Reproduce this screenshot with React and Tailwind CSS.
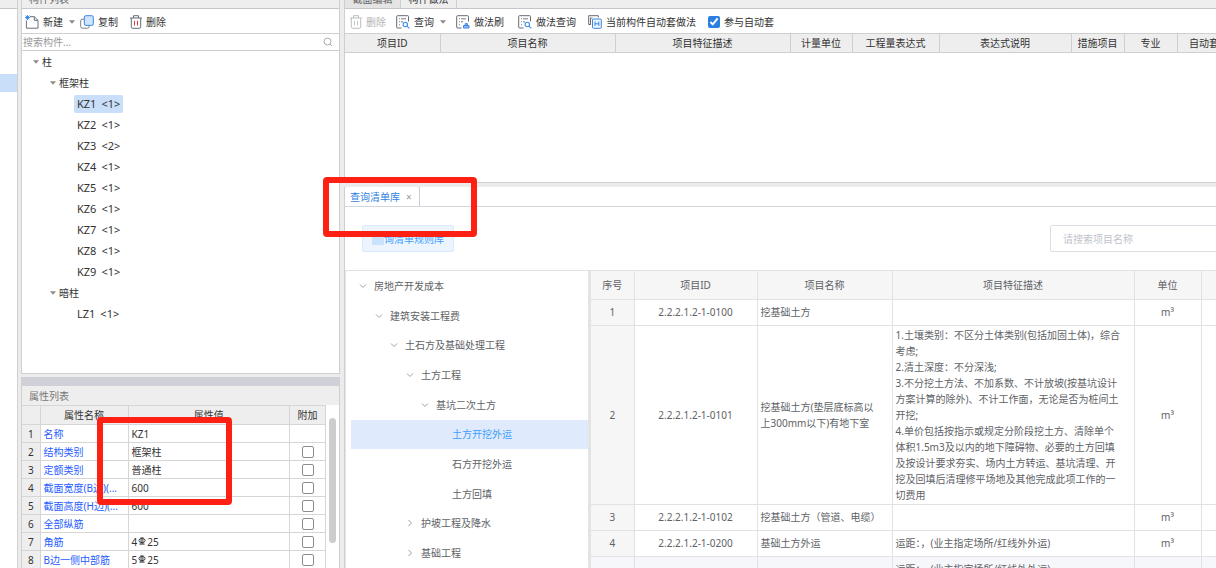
import React, { useState } from "react";

const components = [
  { label: "柱", level: 0 },
  { label: "框架柱", level: 1 },
  { label: "KZ1 <1>", level: 2 },
  { label: "KZ2 <1>", level: 2 },
  { label: "KZ3 <2>", level: 2 },
  { label: "KZ4 <1>", level: 2 },
  { label: "KZ5 <1>", level: 2 },
  { label: "KZ6 <1>", level: 2 },
  { label: "KZ7 <1>", level: 2 },
  { label: "KZ8 <1>", level: 2 },
  { label: "KZ9 <1>", level: 2 },
  { label: "暗柱", level: 1 },
  { label: "LZ1 <1>", level: 2 },
];

const componentIndent = ["pl-[11px]", "pl-[28px]", "pl-[52px]"];

const properties = [
  { name: "名称", value: "KZ1", noCheck: true },
  { name: "结构类别", value: "框架柱" },
  { name: "定额类别", value: "普通柱" },
  { name: "截面宽度(B边)(...", value: "600" },
  { name: "截面高度(H边)(...", value: "600" },
  { name: "全部纵筋", value: "" },
  { name: "角筋", count: "4", value: "25" },
  { name: "B边一侧中部筋", count: "5", value: "25" },
];

const methodColumns = [
  { label: "项目ID", width: "w-[95px]" },
  { label: "项目名称", width: "w-[175px]" },
  { label: "项目特征描述", width: "w-[175px]" },
  { label: "计量单位", width: "w-[62px]" },
  { label: "工程量表达式", width: "w-[87px]" },
  { label: "表达式说明", width: "w-[132px]" },
  { label: "措施项目", width: "w-[53px]" },
  { label: "专业", width: "w-[53px]" },
  { label: "自动套", width: "w-[54px]" },
];

const library = [
  { label: "房地产开发成本", level: 0, open: true },
  { label: "建筑安装工程费", level: 1, open: true },
  { label: "土石方及基础处理工程", level: 2, open: true },
  { label: "土方工程", level: 3, open: true },
  { label: "基坑二次土方", level: 4, open: true },
  { label: "土方开挖外运", level: 5, leaf: true },
  { label: "石方开挖外运", level: 5, leaf: true },
  { label: "土方回填", level: 5, leaf: true },
  { label: "护坡工程及降水", level: 3 },
  { label: "基础工程", level: 3 },
];

const libraryIndent = [
  "pl-[8px]",
  "pl-[24px]",
  "pl-[39px]",
  "pl-[55px]",
  "pl-[70px]",
  "pl-[86px]",
];

const items = [
  { id: "2.2.2.1.2-1-0100", name: "挖基础土方", desc: [], unit: "m³" },
  {
    id: "2.2.2.1.2-1-0101",
    name: "挖基础土方(垫层底标高以上300mm以下)有地下室",
    desc: [
      "1.土壤类别：不区分土体类别(包括加固土体)，综合考虑;",
      "2.清土深度：不分深浅;",
      "3.不分挖土方法、不加系数、不计放坡(按基坑设计方案计算的除外)、不计工作面，无论是否为桩间土开挖;",
      "4.单价包括按指示或规定分阶段挖土方、清除单个体积1.5m3及以内的地下障碍物、必要的土方回填及按设计要求夯实、场内土方转运、基坑清理、开挖及回填后清理修平场地及其他完成此项工作的一切费用",
    ],
    unit: "m³",
  },
  { id: "2.2.2.1.2-1-0102", name: "挖基础土方（管道、电缆）", desc: [], unit: "m³" },
  { id: "2.2.2.1.2-1-0200", name: "基础土方外运", desc: ["运距：，(业主指定场所/红线外外运)"], unit: "m³" },
];

function NewIcon() {
  return (
    <svg width="14" height="14" viewBox="0 0 14 14" fill="none">
      <path d="M5 1.7h4.3l3.7 3.6v7.9H1.4V5.5M9.3 1.7v3.6H13" stroke="#6b7078" />
      <path d="M2.5 0v5M0 2.5h5M.7.7l3.6 3.6M4.3.7.7 4.3" stroke="#2f83ee" strokeWidth=".9" />
    </svg>
  );
}

function CopyIcon() {
  return (
    <svg width="14" height="14" viewBox="0 0 14 14" fill="none">
      <path d="M4 4.2H2.3Q.7 4.2.7 5.8v5.8q0 1.6 1.6 1.6h5.2q1.6 0 1.6-1.6v-1" stroke="#7a7e86" />
      <rect x="4.3" y=".7" width="9" height="9.7" rx="1.5" fill="#cfe3fc" stroke="#3c86e4" />
    </svg>
  );
}

function TrashIcon({ muted }) {
  return (
    <svg width="12" height="14" viewBox="0 0 12 14" fill="none" stroke={muted ? "#bdbdbd" : "#666b72"}>
      <path d="M0 3h12M3.5 3V.7h5V3M1.3 3v8.8q0 1.5 1.5 1.5h6.4q1.5 0 1.5-1.5V3" />
      <path d="M4.5 5.8v4.7M7.5 5.8v4.7" stroke={muted ? "#c4c4c4" : "#e0393e"} />
    </svg>
  );
}

function SheetIcon({ brush }) {
  return (
    <svg width="14" height="14" viewBox="0 0 14 14" fill="none">
      <path d="M5.5 13h-4Q.7 13 .7 12.200V1.500Q.7.7 1.500.7h10.200q.8 0 .8.8v5" stroke="#666b72" />
      <path d="M3 3.800h1M5 3.800h5M3 6.800h1M5 6.800h2M3 9.800h1" stroke="#777c83" />
      {brush ? (
        <path d="M7.500 13v-2.500H13V13zM9.200 10.500V8.600h2.100v1.900" fill="#8bbcf8" stroke="#3c86e4" />
      ) : (
        <g stroke="#3c8cf0" strokeWidth="1.1">
          <circle cx="9.3" cy="9.5" r="2.2" />
          <path d="m11 11.200 2.300 2.200" />
        </g>
      )}
    </svg>
  );
}

function AutoIcon() {
  return (
    <svg width="14" height="14" viewBox="0 0 14 14" fill="none">
      <path d="M2.500 9.500H.7V.7h9.600v1.800M4.500 3h-2v7" stroke="#666b72" />
      <rect x="4.5" y="4" width="8.8" height="9.3" rx="1" fill="#eef5ff" stroke="#3c86e4" />
      <path d="M7 6.500v4.500M10.800 6.500v4.500M7 8.800h3.800" stroke="#3c86e4" />
    </svg>
  );
}

function Caret() {
  return (
    <svg width="6" height="4" viewBox="0 0 6 4" className="shrink-0">
      <path d="M0 .3h6L3 3.700z" fill="#8a8a8a" />
    </svg>
  );
}

function Chevron({ open }) {
  return (
    <svg width="8" height="8" viewBox="0 0 8 8" fill="none" stroke="#a0a0a0" className="shrink-0">
      <path d={open ? "M1 2.5 4 5.5 7 2.5" : "M2.5 1 5.5 4 2.5 7"} />
    </svg>
  );
}

// HRB400 rebar mark drawn between the bar count and the diameter
function RebarMark() {
  return (
    <svg width="8" height="8" viewBox="0 0 9 9" fill="none" stroke="#333" className="mx-px inline-block align-[1px]">
      <ellipse cx="4.5" cy="4" rx="3.5" ry="2.3" />
      <path d="M3.500 0v8M5.500 0v8M1.500 8h6" />
    </svg>
  );
}

function ToolButton({ icon, label, disabled }) {
  return (
    <button disabled={disabled} className="flex shrink-0 items-center gap-1 text-[#333] disabled:text-[#b5b5b5]">
      {icon}
      {label}
    </button>
  );
}

function ComponentPanel() {
  const [selected, setSelected] = useState("KZ1 <1>");

  return (
    <section className="flex h-[374px] shrink-0 flex-col border border-t-0 border-[#cfcfcf] bg-white">
      <h2 className="-mt-[11px] flex h-5 shrink-0 items-center border-b border-[#c3c7cb] bg-[#eee] pl-[7px] text-[#666]">
        构件列表
      </h2>
      <div className="flex h-[25px] shrink-0 items-center border-b border-[#cfcfcf] pt-px pl-[3px]">
        <ToolButton icon={<NewIcon />} label="新建" />
        <span className="mr-[5px] ml-[6px]">
          <Caret />
        </span>
        <ToolButton icon={<CopyIcon />} label="复制" />
        <span className="w-3" />
        <ToolButton icon={<TrashIcon />} label="删除" />
      </div>
      <label className="flex h-[17px] shrink-0 items-center border-b border-[#cfcfcf] pr-[6px]">
        <input
          type="text"
          aria-label="搜索构件"
          placeholder="搜索构件..."
          className="min-w-0 flex-1 pl-px outline-none placeholder:text-[#999]"
        />
        <svg width="10" height="10" viewBox="0 0 10 10" fill="none" stroke="#aaa">
          <circle cx="4.5" cy="4.5" r="3.5" />
          <path d="m7 7 2 2" />
        </svg>
      </label>
      <ul>
        {components.map((c) => (
          <li key={c.label} className={`flex h-[21px] items-center ${componentIndent[c.level]}`}>
            {c.level < 2 ? (
              <button className="flex items-center gap-[3px]">
                <Caret />
                {c.label}
              </button>
            ) : (
              <button
                onClick={() => setSelected(c.label)}
                className={`h-[18px] rounded-[2px] px-[3px] text-[11px] ${
                  selected === c.label ? "bg-[#c9dff9]" : ""
                }`}
              >
                {c.label.split(" ")[0]}
                <span className="ml-[5px]">{c.label.split(" ")[1]}</span>
              </button>
            )}
          </li>
        ))}
      </ul>
    </section>
  );
}

function PropertyPanel() {
  return (
    <section className="mt-[3px] flex min-h-0 flex-1 flex-col overflow-hidden border-x border-[#cfcfcf] bg-white">
      <div className="h-[9px] shrink-0 bg-[#d0d1d8]" />
      <h2 className="flex h-[19px] shrink-0 items-center bg-[#eee] pl-[7px] text-[#777]">属性列表</h2>
      <div className="flex min-h-0 flex-1">
        <table className="w-full table-fixed border-collapse self-start">
          <thead>
            <tr className="h-[19px] bg-[#eee]">
              <th className="w-[18px] border border-l-0 border-[#d6d6d6]" />
              <th className="w-[88px] border border-[#d6d6d6] font-normal">属性名称</th>
              <th className="border border-[#d6d6d6] font-normal">属性值</th>
              <th className="w-[36px] border border-[#d6d6d6] font-normal">附加</th>
            </tr>
          </thead>
          <tbody>
            {properties.map((p, i) => (
              <tr key={p.name} className="h-[18px]">
                <td className="border border-l-0 border-[#d6d6d6] bg-[#eee] text-center">{i + 1}</td>
                <td className="overflow-hidden border border-[#d6d6d6] pl-[3px] whitespace-nowrap text-[#1f5cff]">
                  {p.name}
                </td>
                <td className="border border-[#d6d6d6] pl-[3px]">
                  {p.count}
                  {p.count && <RebarMark />}
                  {p.value}
                </td>
                <td className="border border-[#d6d6d6]">
                  {!p.noCheck && (
                    <input
                      type="checkbox"
                      aria-label={p.name + " 附加"}
                      className="mx-auto block h-3 w-3 appearance-none rounded-[2px] border border-[#8c8c8c] bg-white"
                    />
                  )}
                </td>
              </tr>
            ))}
          </tbody>
        </table>
        <div className="w-[13px] shrink-0 px-[3px] pt-[13px]">
          <div className="h-[125px] rounded-full bg-[#cdcdcd]" />
        </div>
      </div>
    </section>
  );
}

function MethodPanel() {
  return (
    <section className="flex h-[183px] shrink-0 flex-col overflow-hidden border-b border-l border-[#cfcfcf] bg-white">
      <div className="-mt-[11px] flex h-5 shrink-0 border-b border-[#c3c7cb] bg-[#eee]">
        <button className="w-[56px] border-r border-[#cfcfcf] bg-[#e4e4e4] text-[#666]">截面编辑</button>
        <button className="w-[56px] border-r border-[#cfcfcf]">构件做法</button>
      </div>
      <div className="flex h-6 shrink-0 items-center pt-px pl-[5px]">
        <ToolButton icon={<TrashIcon muted />} label="删除" disabled />
        <span className="w-[10px]" />
        <ToolButton icon={<SheetIcon />} label="查询" />
        <span className="mr-[10px] ml-[6px]">
          <Caret />
        </span>
        <ToolButton icon={<SheetIcon brush />} label="做法刷" />
        <span className="w-[14px]" />
        <ToolButton icon={<SheetIcon />} label="做法查询" />
        <span className="w-3" />
        <ToolButton icon={<AutoIcon />} label="当前构件自动套做法" />
        <label className="ml-3 flex shrink-0 items-center gap-1">
          <input type="checkbox" defaultChecked className="h-3 w-3 accent-[#2a7fe0]" />
          参与自动套
        </label>
      </div>
      <table className="w-[886px] table-fixed border-collapse">
        <thead>
          <tr className="h-[19px] bg-[#eee]">
            {methodColumns.map((c) => (
              <th key={c.label} className={`${c.width} border border-l-0 border-[#cfcfcf] font-normal`}>
                {c.label}
              </th>
            ))}
          </tr>
        </thead>
      </table>
    </section>
  );
}

function LibraryTree() {
  const [selected, setSelected] = useState("土方开挖外运");

  return (
    <ul className="flex w-[246px] shrink-0 flex-col border-r-[3px] border-l border-[#e4e4e4] pl-[5px] text-[#606266]">
      {library.map((n) => (
        <li key={n.label} className="flex flex-1">
          <button
            onClick={() => setSelected(n.label)}
            className={`flex flex-1 items-center gap-[7px] ${libraryIndent[n.level]} ${
              selected === n.label ? "bg-[#dfebfc] text-[#409eff]" : ""
            }`}
          >
            {n.leaf ? <span className="w-2" /> : <Chevron open={n.open} />}
            {n.label}
          </button>
        </li>
      ))}
    </ul>
  );
}

function ItemTable() {
  const th = "border border-t-0 border-l-0 border-[#e2e2e2] font-normal";
  const td = "border border-t-0 border-l-0 border-[#e2e2e2]";

  return (
    <table className="w-[648px] shrink-0 table-fixed border-collapse self-start leading-4 text-[#606266]">
      <thead>
        <tr className="h-[28px] bg-[#f6f6f6]">
          <th className={`w-[43px] ${th}`}>序号</th>
          <th className={`w-[123px] ${th}`}>项目ID</th>
          <th className={`w-[135px] ${th}`}>项目名称</th>
          <th className={`w-[242px] ${th}`}>项目特征描述</th>
          <th className={`w-[67px] ${th}`}>单位</th>
          <th className={th} />
        </tr>
      </thead>
      <tbody>
        {items.map((item, i) => (
          <tr key={item.id} className="h-[26px]">
            <td className={`bg-[#f6f6f6] text-center ${td}`}>{i + 1}</td>
            <td className={`text-center ${td}`}>{item.id}</td>
            <td className={`pr-[10px] pl-[3px] ${td}`}>{item.name}</td>
            <td className={`py-px pr-[10px] pl-[3px] ${td}`}>
              {item.desc.map((line) => (
                <p key={line}>{line}</p>
              ))}
            </td>
            <td className={`text-center ${td}`}>{item.unit}</td>
            <td className={td} />
          </tr>
        ))}
        <tr className="bg-[#f5f7fa] align-top">
          <td className={td} />
          <td className={td} />
          <td className={td} />
          <td className={`py-1 pr-[10px] pl-[3px] ${td}`}>运距：，(业主指定场所/红线外外运)</td>
          <td className={td} />
          <td className={td} />
        </tr>
      </tbody>
    </table>
  );
}

function QueryPanel() {
  return (
    <section className="mt-1 flex min-h-0 flex-1 flex-col overflow-hidden border-l border-[#cfcfcf] bg-white">
      <div className="flex h-5 shrink-0 items-end border-b border-[#d3d6da]">
        <div className="flex h-5 w-[75px] items-center rounded-t-[2px] border border-b-0 border-l-0 border-[#c9cdd2] pl-[5px] text-[#2f7fe0]">
          <button>查询清单库</button>
          <button aria-label="关闭" className="ml-[6px] text-[#999]">
            ×
          </button>
        </div>
      </div>
      <div className="flex h-16 shrink-0 items-center justify-between border-b border-[#e2e2e2] pl-[17px]">
        <button className="flex h-[27px] w-[92px] items-center rounded-[2px] border border-[#d9eaff] bg-[#ecf4ff] pl-[9px] text-[#409eff]">
          <span className="h-3 w-3 bg-[#cbe2fd]" />
          询清单规则库
        </button>
        <input
          type="text"
          aria-label="搜索项目名称"
          placeholder="请搜索项目名称"
          className="-mr-[10px] h-[27px] w-[176px] rounded-[2px] border border-[#dcdfe6] pl-3 outline-none placeholder:text-[#c0c4cc]"
        />
      </div>
      <div className="flex min-h-0 flex-1">
        <LibraryTree />
        <ItemTable />
      </div>
    </section>
  );
}

export default function App() {
  return (
    <div className="relative flex h-screen w-full overflow-hidden bg-[#ececec] font-['Noto_Sans','Noto_Sans_CJK_SC',sans-serif] text-[10px] leading-[14px] text-[#333]">
      <aside className="flex w-[18px] shrink-0 flex-col border-r border-[#cfcfcf] bg-white">
        <div className="h-[9px] border-b border-[#c3c7cb] bg-[#eee]" />
        <div className="mt-[65px] h-[18px] bg-[#c9dff9]" />
      </aside>
      <div className="ml-[3px] flex w-[319px] shrink-0 flex-col">
        <ComponentPanel />
        <PropertyPanel />
      </div>
      <main className="ml-1 flex min-w-0 flex-1 flex-col">
        <MethodPanel />
        <QueryPanel />
      </main>
      <div className="pointer-events-none absolute top-[177px] left-[323px] h-[60px] w-[154px] rounded-[4px] border-[6px] border-[#ff2014]" />
      <div className="pointer-events-none absolute top-[417px] left-[97px] h-[88px] w-[135px] rounded-[4px] border-[6px] border-[#ff2014]" />
    </div>
  );
}
